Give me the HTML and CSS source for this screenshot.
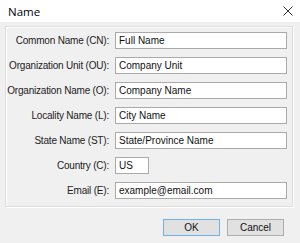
FILE: index.html
```html
<!DOCTYPE html>
<html lang="en">
<head>
    <meta charset="UTF-8">
    <title>Name</title>
    <link rel="stylesheet" href="styles.css">
</head>
<body>
    <div class="dialog">
        <div class="titlebar">
            <span class="title">Name</span>
            <svg class="close" width="10" height="10" viewBox="0 0 10 10">
                <path d="M0.5 0.5 L9.5 9.5 M9.5 0.5 L0.5 9.5" stroke="#333" stroke-width="1" fill="none"/>
            </svg>
        </div>
        <div class="content">
            <div class="group">
                <label for="cn">Common Name (CN):</label>
                <input type="text" id="cn" value="Full Name">
                <label for="ou">Organization Unit (OU):</label>
                <input type="text" id="ou" value="Company Unit">
                <label for="o">Organization Name (O):</label>
                <input type="text" id="o" value="Company Name">
                <label for="l">Locality Name (L):</label>
                <input type="text" id="l" value="City Name">
                <label for="st">State Name (ST):</label>
                <input type="text" id="st" value="State/Province Name">
                <label for="c">Country (C):</label>
                <input type="text" id="c" class="short" value="US">
                <label for="e">Email (E):</label>
                <input type="text" id="e" value="example@email.com">
            </div>
            <div class="buttons">
                <button class="btn btn-default">OK</button>
                <button class="btn">Cancel</button>
            </div>
        </div>
    </div>
</body>
</html>
```

FILE: styles.css
```css
body {
    margin: 0;
    padding: 0;
    background-color: #f0f0f0;
    font-family: "Liberation Sans", sans-serif;
    font-size: 10px;
    color: #000;
}
.dialog {
    width: 300px;
    height: 243px;
    overflow: hidden;
}
.titlebar {
    height: 22px;
    background-color: #fff;
    display: flex;
    align-items: center;
    justify-content: space-between;
    padding: 0 8px;
}
.title {
    font-family: "Open Sans", "Liberation Sans", sans-serif;
    font-size: 11.5px;
    color: #000;
}
.close {
    margin-right: -1px;
}
.content {
    padding: 4px 7px 0 5px;
}
.group {
    border: 1px solid #dcdcdc;
    box-shadow: inset 1px 1px 0 #fff, 1px 1px 0 #fff;
    display: grid;
    grid-template-columns: 103px 1fr;
    align-items: center;
    column-gap: 6px;
    row-gap: 8px;
    padding: 5px 5px 7px 0;
}
label {
    text-align: right;
    white-space: nowrap;
    letter-spacing: -0.2px;
    color: #222;
}
input {
    height: 17px;
    box-sizing: border-box;
    border: 1px solid #aaa;
    background-color: #fff;
    font-family: "Liberation Sans", sans-serif;
    font-size: 10px;
    color: #111;
    padding: 0 3px;
    margin: 0;
    width: 100%;
}
.short {
    width: 34px;
}
.buttons {
    display: flex;
    justify-content: flex-end;
    gap: 7px;
    margin-top: 12px;
    padding-right: 9px;
}
.btn {
    width: 57px;
    height: 17px;
    background-color: #e1e1e1;
    border: 1px solid #adadad;
    font-family: "Liberation Sans", sans-serif;
    font-size: 10px;
    color: #111;
    padding: 0;
}
.btn-default {
    border-color: #6fb2e6;
}
```
